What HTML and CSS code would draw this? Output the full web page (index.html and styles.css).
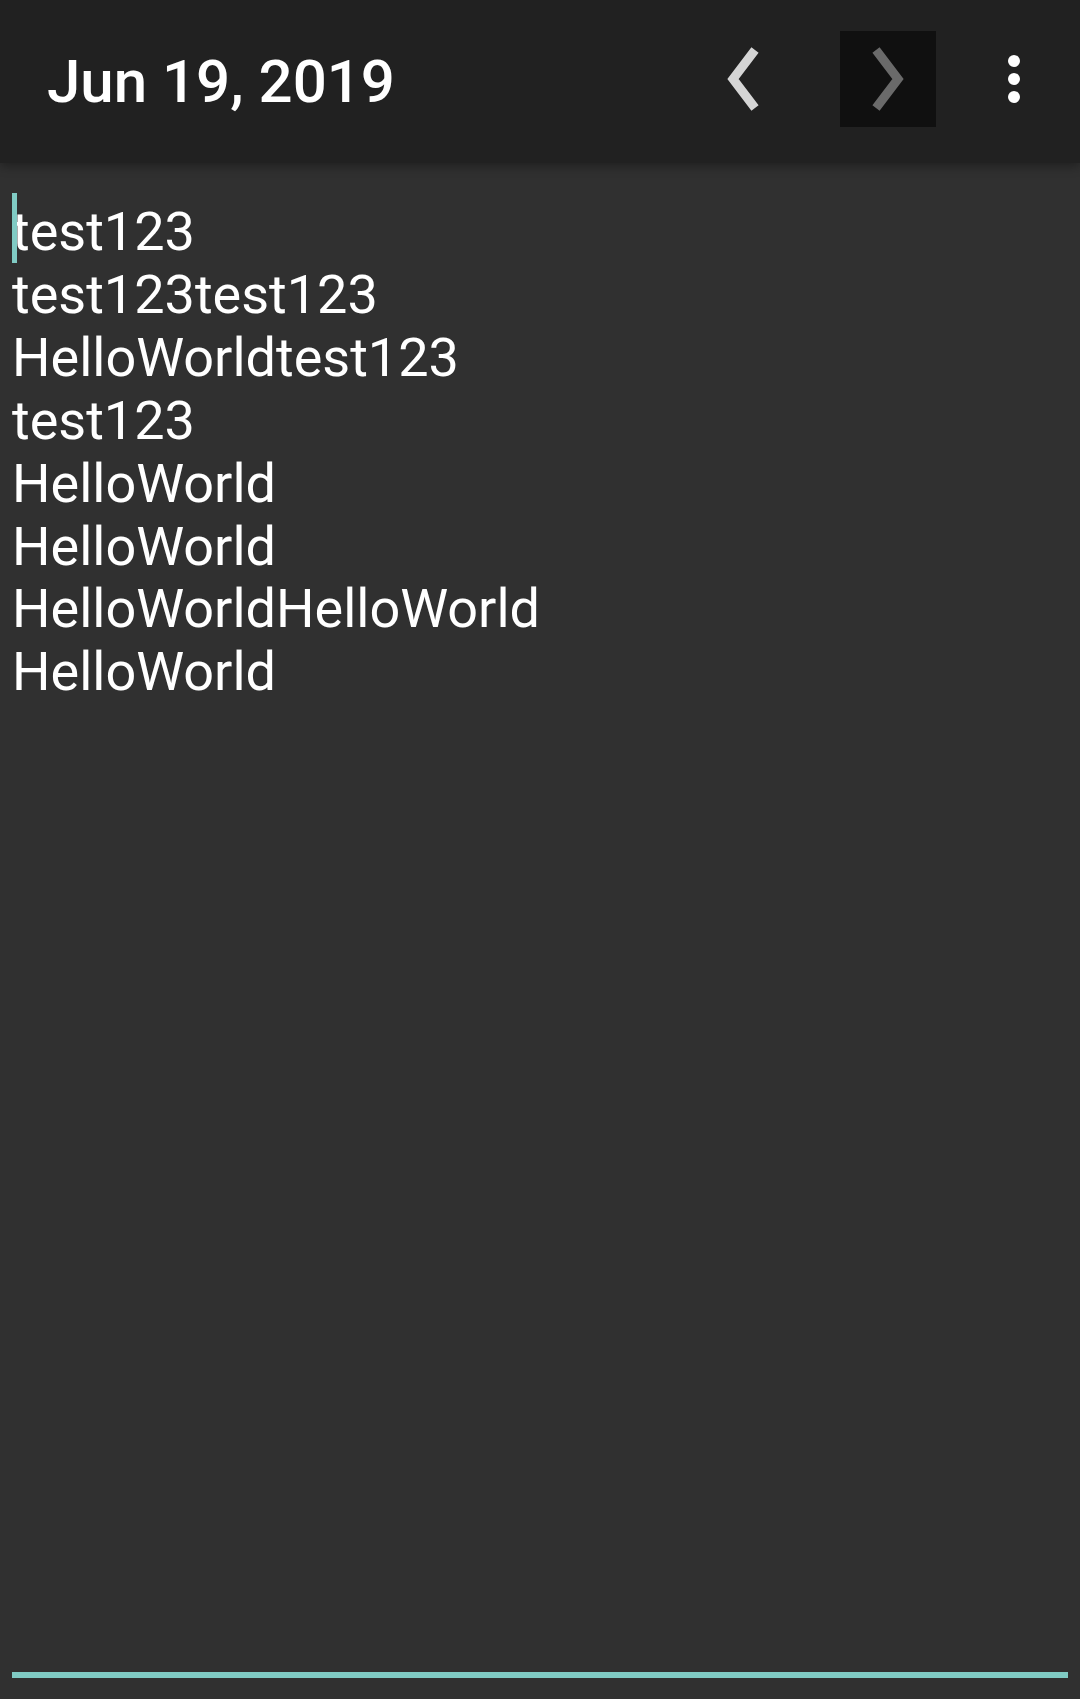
FILE: index.html
```html
<!DOCTYPE html>
<html>
<head>
<meta charset="utf-8">
<link rel="stylesheet" href="styles.css">
</head>
<body>
<div class="screen">
  <header class="toolbar">
    <div class="title">Jun 19, 2019</div>
    <div class="actions">
      <div class="nav-btn">
        <svg width="96" height="96" viewBox="0 0 96 96"><polyline points="60,19 38,48 60,77" fill="none" stroke="#d5d5d5" stroke-width="9" stroke-linejoin="miter"/></svg>
      </div>
      <div class="nav-btn pressed">
        <svg width="96" height="96" viewBox="0 0 96 96"><polyline points="36,19 58,48 36,77" fill="none" stroke="#6a6a6a" stroke-width="9" stroke-linejoin="miter"/></svg>
      </div>
      <div class="overflow-btn">
        <span class="dot"></span><span class="dot"></span><span class="dot"></span>
      </div>
    </div>
  </header>
  <main class="editor">
    <div class="line"><span class="cursor"></span>test123</div>
    <div class="line">test123test123</div>
    <div class="line">HelloWorldtest123</div>
    <div class="line">test123</div>
    <div class="line">HelloWorld</div>
    <div class="line">HelloWorld</div>
    <div class="line">HelloWorldHelloWorld</div>
    <div class="line">HelloWorld</div>
  </main>
  <div class="underline"></div>
</div>
</body>
</html>
```

FILE: styles.css
```css
html, body {
  margin: 0;
  padding: 0;
  background: #303030;
}

.screen {
  width: 1080px;
  height: 1699px;
  display: flex;
  flex-direction: column;
  background: #303030;
  overflow: hidden;
}

.toolbar {
  position: relative;
  z-index: 2;
  height: 163px;
  flex: 0 0 163px;
  background: #212121;
  display: flex;
  align-items: center;
  padding-left: 47px;
  padding-right: 30px;
  box-shadow: 0 3px 10px rgba(0, 0, 0, 0.35);
}

.title {
  font-family: Roboto, "Noto Sans", sans-serif;
  font-weight: 500;
  font-size: 60px;
  color: #ffffff;
  white-space: nowrap;
}

.actions {
  margin-left: auto;
  margin-bottom: 5px;
  display: flex;
  align-items: center;
}

.nav-btn {
  width: 96px;
  height: 96px;
  display: flex;
}

.nav-btn + .nav-btn {
  margin-left: 49px;
}

.nav-btn.pressed {
  background: #101010;
}

.overflow-btn {
  width: 72px;
  height: 96px;
  margin-left: 42px;
  display: flex;
  flex-direction: column;
  align-items: center;
  justify-content: center;
  gap: 6px;
}

.dot {
  width: 12px;
  height: 12px;
  border-radius: 50%;
  background: #ffffff;
}

.editor {
  flex: 1;
  padding: 38px 12px 0 12px;
  font-family: Roboto, "Noto Sans", sans-serif;
  font-size: 54px;
  line-height: 62.9px;
  color: #ffffff;
}

.line {
  position: relative;
  white-space: nowrap;
}

.cursor {
  position: absolute;
  left: 0;
  top: -8px;
  width: 5px;
  height: 70px;
  background: #80cbc4;
}

.underline {
  height: 6px;
  margin: 0 12px 21px 12px;
  background: #80cbc4;
  flex: 0 0 6px;
}
```
